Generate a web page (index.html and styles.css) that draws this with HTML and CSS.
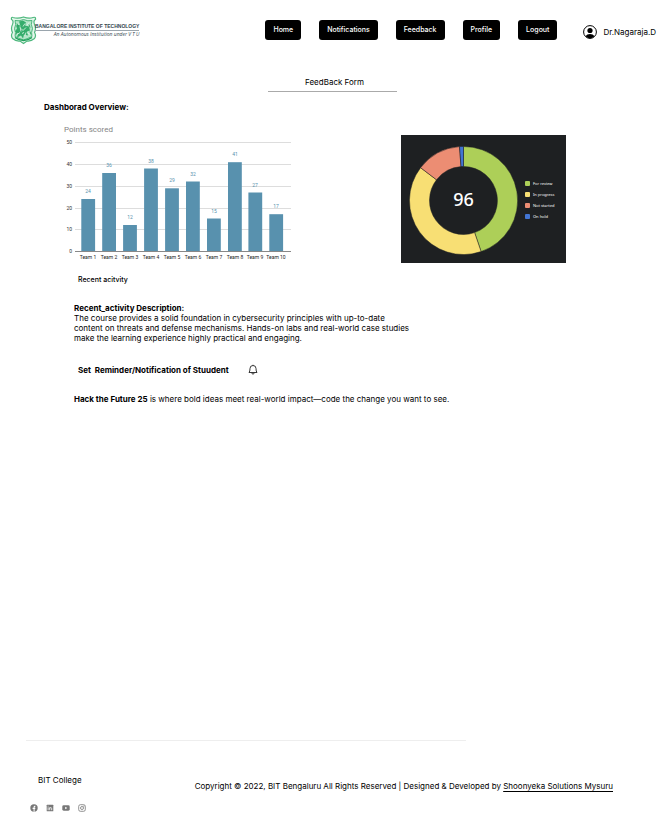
FILE: index.html
```html
<!DOCTYPE html>
<html lang="en">
<head>
<meta charset="utf-8">
<meta name="viewport" content="width=device-width, initial-scale=1">
<title>FeedBack Form</title>
<link rel="stylesheet" href="styles.css">
</head>
<body>
<header class="header">
  <div class="brand">
    <svg class="crest" viewBox="0 0 27 29" aria-hidden="true">
      <path d="M3 2Q1 1 1.500 4Q4 5 2.500 9Q.5 13 2.500 17Q.5 20 2.500 23Q6 26 10 25.500L13.500 28L17 25.500Q21 26 24.500 23Q26.500 20 24.500 17Q26.500 13 24.500 9Q23 5 25.500 4Q26 1 23 2Q19 3.500 13.500 1.500Q8 3.500 3 2Z" fill="#e4f6eb" stroke="#4fb87e" stroke-width="1.200"/>
      <path d="M5 5Q9 6 13.500 4Q18 6 22 5Q20.500 9 22.500 13Q21 17 22 21Q18 23 13.500 24.500Q9 23 5 21Q6 17 4.500 13Q6.500 9 5 5Z" fill="#b4e6c9" stroke="#3fb072" stroke-width=".9"/>
      <path d="M13 5l3 2-1 3 4 1 1 4-3 1 1 4-4-1-1 4-2-3-4 2 1-4-3-2 2-3-1-3 4-1-1-3z" fill="#35ad6c"/>
      <path d="M8 8l2 2M19 7l-2 3M7 19l3-2M20 19l-3-2M11 13l2 2 3-3M12 18l2-1M10 11l1 5M15 8l-2 3M16 17l-1 3" stroke="#e8f8ee" stroke-width=".8" fill="none"/>
      <path d="M7 8l1 3M19 9l1 3M7 16l-1 3M20 16l1 3" stroke="#2a9d5c" stroke-width=".9"/>
      <path d="M5 22Q9 25 13.500 25Q18 25 22 22" stroke="#20a05c" stroke-width="1.500" fill="none"/>
    </svg>
    <div class="brand-text">
      <span class="brand-name">BANGALORE INSTITUTE OF TECHNOLOGY</span>
      <span class="brand-sub">An Autonomous Institution under V T U</span>
    </div>
  </div>
  <nav class="nav">
    <button type="button">Home</button>
    <button type="button">Notifications</button>
    <button type="button">Feedback</button>
    <button type="button">Profile</button>
    <button type="button">Logout</button>
  </nav>
  <div class="user">
    <svg class="avatar" viewBox="0 0 14 14" aria-hidden="true">
      <circle cx="7" cy="7" r="6.400" fill="#fff" stroke="#000" stroke-width="1"/>
      <circle cx="7" cy="5.500" r="2.600"/>
      <path d="M2.500 11.300Q4 9 7 9T11.500 11.300Q9.500 13.400 7 13.400T2.500 11.300Z"/>
    </svg>
    <span>Dr.Nagaraja.D</span>
  </div>
</header>

<main class="main">
  <h1 class="title">FeedBack Form</h1>
  <h2 class="overview">Dashborad Overview:</h2>

  <div class="charts">
    <svg class="bars" viewBox="0 0 232 140" role="img" aria-label="Points scored by team">
      <text class="bars-title" x="4" y="8">Points scored</text>
      <path class="grid" d="M15 18.500H231M15 40.500H231M15 62.500H231M15 84.500H231M15 105.500H231"/>
      <g class="axis-y">
        <text x="12" y="20">50</text><text x="12" y="42">40</text><text x="12" y="64">30</text>
        <text x="12" y="86">20</text><text x="12" y="107">10</text><text x="12" y="129">0</text>
      </g>
      <g class="bar">
        <rect x="21.300" y="75" width="13.800" height="52"/>
        <rect x="42.200" y="49" width="13.800" height="78"/>
        <rect x="63.100" y="101" width="13.800" height="26"/>
        <rect x="84.100" y="44.500" width="13.800" height="82.500"/>
        <rect x="105.100" y="64.300" width="13.800" height="62.700"/>
        <rect x="126" y="57.500" width="13.800" height="69.500"/>
        <rect x="147" y="94.500" width="13.800" height="32.500"/>
        <rect x="168" y="38.200" width="13.800" height="88.800"/>
        <rect x="188.400" y="68.500" width="13.800" height="58.500"/>
        <rect x="209.300" y="90.200" width="13.800" height="36.800"/>
      </g>
      <path class="baseline" d="M15 127.500H231"/>
      <g class="values">
        <text x="28" y="77" dy="-8">24</text><text x="49" y="51" dy="-8">36</text><text x="70" y="103" dy="-8">12</text>
        <text x="91" y="47" dy="-8">38</text><text x="112" y="66" dy="-8">29</text><text x="133" y="60" dy="-8">32</text>
        <text x="154" y="97" dy="-8">15</text><text x="175" y="40" dy="-8">41</text><text x="195" y="71" dy="-8">27</text>
        <text x="216" y="92" dy="-8">17</text>
      </g>
      <g class="teams">
        <text x="28" y="135">Team 1</text><text x="49" y="135">Team 2</text><text x="70" y="135">Team 3</text>
        <text x="91" y="135">Team 4</text><text x="112" y="135">Team 5</text><text x="133" y="135">Team 6</text>
        <text x="154" y="135">Team 7</text><text x="175" y="135">Team 8</text><text x="195" y="135">Team 9</text>
        <text x="216" y="135">Team 10</text>
      </g>
    </svg>

    <section class="status">
      <svg class="donut" viewBox="-54.500 -54.500 109 109" role="img" aria-label="96 items by status">
        <g stroke="#1e2022" stroke-width=".5">
          <path fill="#adcf58" d="M0-54A54 54 0 0 1 17.600 51.100L11.100 32.100A34 34 0 0 0 0-34Z"/>
          <path fill="#f8df74" d="M17.600 51.100A54 54 0 0 1-42.900-32.800L-27-20.700A34 34 0 0 0 11.100 32.100Z"/>
          <path fill="#ec8d73" d="M-42.900-32.800A54 54 0 0 1-4-53.900L-2.500-33.900A34 34 0 0 0-27-20.700Z"/>
          <path fill="#4274d2" d="M-4-53.900A54 54 0 0 1 0-54L0-34A34 34 0 0 0-2.500-33.900Z"/>
        </g>
        <text class="total" x="0" y="5">96</text>
      </svg>
      <ul class="legend">
        <li><i class="key review"></i>For review</li>
        <li><i class="key progress"></i>In progress</li>
        <li><i class="key waiting"></i>Not started</li>
        <li><i class="key hold"></i>On hold</li>
      </ul>
    </section>
  </div>

  <div class="activity">
    <h3 class="recent">Recent acitvity</h3>
    <div class="description">
      <h3>Recent_activity Description:</h3>
      <p>The course provides a solid foundation in cybersecurity principles with up-to-date<br>content on threats and defense mechanisms. Hands-on labs and real-world case studies<br>make the learning experience highly practical and engaging.</p>
    </div>
    <div class="reminder">
      <h3>Set&nbsp; Reminder/Notification of Stuudent</h3>
      <svg class="bell" viewBox="0 0 10 11" fill="none" stroke="#222" stroke-width=".9" stroke-linejoin="round" aria-hidden="true">
        <path d="M1 8.500Q2 7.500 2 4.500A3 3 0 0 1 8 4.500Q8 7.500 9 8.500ZM3.800 8.700Q4 10.200 5 10.200T6.200 8.700M5 .8V1.500"/>
      </svg>
    </div>
    <p class="news"><strong>Hack the Future 25</strong> is where bold ideas meet real-world impact—code the change you want to see.</p>
  </div>
</main>

<footer class="footer">
  <hr class="rule">
  <div class="footer-row">
    <div class="college">
      <p>BIT College</p>
      <div class="social">
        <a href="#" aria-label="Facebook"><svg viewBox="0 0 8 8"><circle cx="4" cy="4" r="3.700" fill="#777"/><path d="M3.600 7.800V4.900H2.600V3.800H3.600V3Q3.600 1.600 5.400 1.800V2.700Q4.600 2.600 4.600 3.200V3.800H5.400L5.200 4.900H4.600V7.800Z" fill="#fff"/></svg></a>
        <a href="#" aria-label="LinkedIn"><svg viewBox="0 0 8 8"><rect x=".7" y=".7" width="6.600" height="6.600" rx=".5" fill="#777"/><path d="M2.100 3.300V6.200M2.100 1.800V2.500M3.700 6.200V3.300M3.700 4.500Q4 3.600 4.800 3.600T5.700 4.600V6.200" stroke="#fff" stroke-width=".8" fill="none"/></svg></a>
        <a href="#" aria-label="YouTube"><svg viewBox="0 0 8 8"><rect x=".3" y="1.300" width="7.400" height="5.400" rx="1.400" fill="#777"/><path d="M3.200 2.800V5.200L5.300 4Z" fill="#fff"/></svg></a>
        <a href="#" aria-label="Instagram"><svg viewBox="0 0 8 8" fill="none" stroke="#777" stroke-width=".8"><rect x=".7" y=".7" width="6.600" height="6.600" rx="1.700"/><circle cx="4" cy="4" r="1.500"/><circle cx="5.900" cy="2.100" r=".2"/></svg></a>
      </div>
    </div>
    <p class="copyright">Copyright © 2022, BIT Bengaluru All Rights Reserved | Designed &amp; Developed by <a href="#">Shoonyeka Solutions Mysuru</a></p>
  </div>
</footer>
</body>
</html>
```
FILE: styles.css
```css
* { box-sizing: border-box; }

body {
  margin: 0;
  min-height: 100vh;
  display: flex;
  flex-direction: column;
  background: #fff;
  color: #000;
  font: 8px/10px Inter, "Liberation Sans", sans-serif;
}

h1, h2, h3, p, ul { margin: 0; padding: 0; font-size: inherit; }
svg { display: block; flex: none; }

.header {
  display: flex;
  align-items: center;
  padding: 15px 7px 0 10px;
}

.brand { display: flex; align-items: center; }
.crest { width: 27px; height: 30px; }
.brand-text {
  display: flex;
  flex-direction: column;
  align-items: flex-end;
  margin-left: -2px;
  white-space: nowrap;
  font-family: "Liberation Sans", sans-serif;
  line-height: 7px;
  color: #344750;
}
.brand-name { border-bottom: 1px solid #9aa5ad; font-size: 5px; font-weight: 700; }
.brand-sub { font-family: "Open Sans", sans-serif; font-size: 5px; font-style: italic; }

.nav { display: flex; gap: 18px; margin-left: auto; }
.nav button {
  height: 20px;
  padding: 0 8px;
  border: 0;
  border-radius: 3px;
  background: #000;
  color: #fff;
  font: 500 7px/10px Inter, sans-serif;
}

.user {
  display: flex;
  align-items: center;
  gap: 6px;
  margin-left: 26px;
  padding-top: 3px;
  white-space: nowrap;
}
.avatar { width: 14px; height: 14px; }

.main { flex: 1; padding: 32px 42px 0 44px; }
.title {
  width: 129px;
  margin: 0 auto;
  padding: 0 0 4px 4px;
  border-bottom: 1px solid #aaa;
  text-align: center;
  font-weight: 400;
}
.overview { margin-top: 10px; font-weight: 700; }

.charts {
  display: flex;
  justify-content: space-between;
  margin-top: 12px;
  padding: 0 55px 0 16px;
}
.bars { width: 232px; height: 140px; font-family: Roboto, sans-serif; }
.bars-title { fill: #858585; font-size: 8px; }
.grid { stroke: #ddd; }
.baseline { stroke: #888; }
.axis-y { fill: #333; font-size: 5px; text-anchor: end; }
.bar { fill: #5891ae; }
.values { fill: #5891ae; font-size: 5px; text-anchor: middle; }
.teams { fill: #222; font-size: 5px; text-anchor: middle; }

.status {
  display: flex;
  align-items: center;
  gap: 7px;
  width: 165px;
  height: 128px;
  margin-top: 11px;
  padding: 2px 0 0 8px;
  background: #1e2022;
}
.donut { width: 109px; height: 109px; }
.total { fill: #fff; font: 500 18px "Noto Sans", sans-serif; text-anchor: middle; }
.legend {
  display: grid;
  gap: 1px;
  color: #fff;
  font: 4px/10px "Noto Sans", sans-serif;
  list-style: none;
  white-space: nowrap;
}
.legend li { display: flex; align-items: center; gap: 3px; }
.key { width: 5px; height: 5px; border-radius: 1px; }
.review { background: #adcf58; }
.progress { background: #f8df74; }
.waiting { background: #ec8d73; }
.hold { background: #4274d2; }

.activity { padding: 11px 0 0 30px; }
.recent { padding-left: 4px; font-size: 7px; font-weight: 500; }
.description { margin-top: 18px; }
.reminder { display: flex; align-items: center; gap: 19px; margin-top: 21px; padding-left: 4px; }
.bell { width: 10px; height: 11px; }
.news { margin-top: 19px; }

.footer { padding: 0 26px 15px; }
.rule { width: 72%; height: 1px; margin: 0; border: 0; background: #eee; }
.footer-row { display: flex; justify-content: space-between; padding: 34px 24px 0 4px; }
.college p { padding-left: 8px; }
.social { display: flex; gap: 8px; margin-top: 19px; }
.social svg { width: 8px; height: 8px; }
.copyright { margin-top: 6px; white-space: nowrap; }
.copyright a { color: inherit; text-underline-offset: 2px; }
```
